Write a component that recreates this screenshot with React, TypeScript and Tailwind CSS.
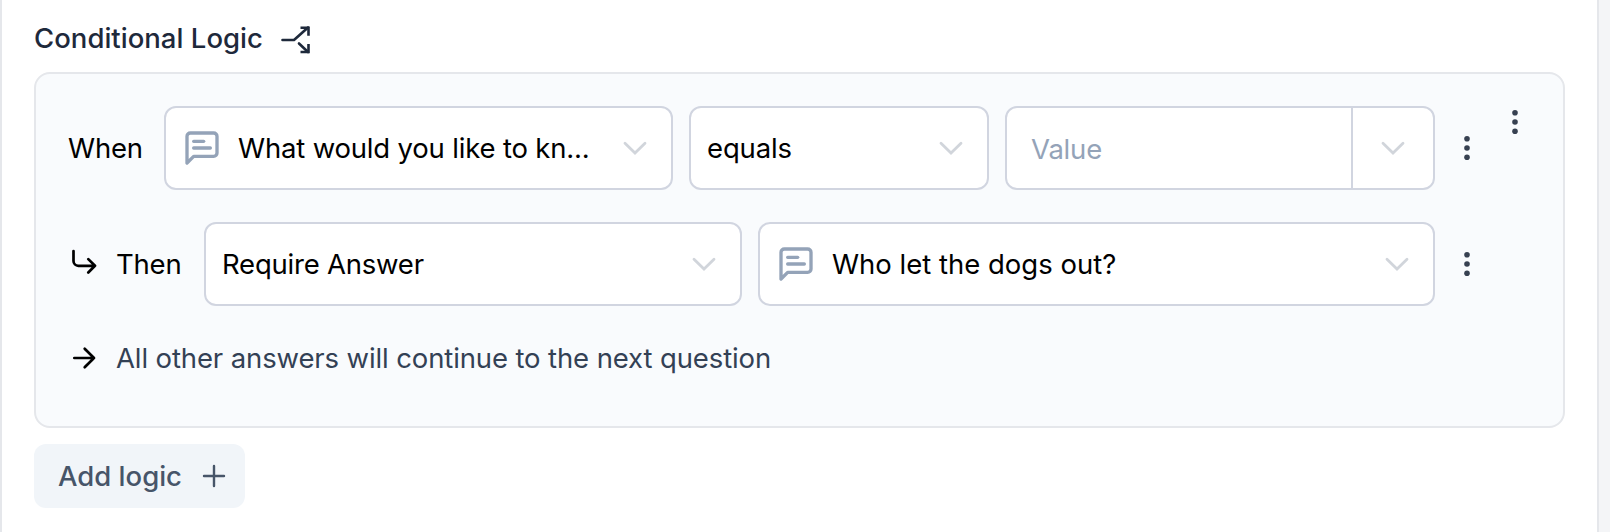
import React from "react";

function MessageIcon() {
  return (
    <svg className="size-10 shrink-0 text-[#94a3b8]" viewBox="0 0 24 24" fill="none" stroke="currentColor" strokeWidth="2" strokeLinecap="round" strokeLinejoin="round">
      <path d="M21 15a2 2 0 0 1-2 2H7l-4 4V5a2 2 0 0 1 2-2h14a2 2 0 0 1 2 2z" />
      <path d="M13 8H7" />
      <path d="M17 12H7" />
    </svg>
  );
}

function Chevron() {
  return (
    <svg className="h-4 w-6 shrink-0 text-[#d1d5db]" viewBox="0 0 24 16" fill="none" stroke="currentColor" strokeWidth="2.8" strokeLinecap="round" strokeLinejoin="miter">
      <path d="M2 3.3 12 13 22 3.3" />
    </svg>
  );
}

function Dots() {
  return (
    <svg className="h-7 w-6 shrink-0 text-[#374151]" viewBox="0 0 24 28" fill="currentColor">
      <circle cx="12" cy="4.7" r="2.8" />
      <circle cx="12" cy="14" r="2.8" />
      <circle cx="12" cy="23.3" r="2.8" />
    </svg>
  );
}

function Select({ className, icon, label, labelClass }: { className: string; icon?: boolean; label: string; labelClass: string }) {
  return (
    <button className={`flex h-[84px] shrink-0 items-center rounded-xl border-2 border-[#d1d5e0] bg-white pl-4 pr-6 text-left ${className}`}>
      {icon && <MessageIcon />}
      <span className={`flex-1 whitespace-nowrap ${labelClass}`}>{label}</span>
      <Chevron />
    </button>
  );
}

export default function App() {
  return (
    <div className="flex h-[532px] w-[1610px] overflow-hidden bg-[#f4f5f7] font-['Inter',sans-serif] text-[27.5px] leading-10 text-black">
      <div className="flex w-[1599px] flex-col items-start border-x-2 border-[#e5e7eb] bg-white px-8">
        <div className="flex h-[72px] items-center pt-1">
          <h2 className="whitespace-nowrap font-medium tracking-[0.02px] text-[#1e293b]">Conditional Logic</h2>
          <svg className="ml-4 size-8 text-[#1e293b]" viewBox="0 0 32 32" fill="none" stroke="currentColor" strokeWidth="2.6">
            <path d="M3.500 18H15L29 5.500" strokeLinecap="round" strokeLinejoin="round" />
            <path d="M21.500 5.800h8v8" />
            <path d="M20 21.500l9 8.500" strokeLinecap="round" />
            <path d="M21.500 30h8v-8" />
          </svg>
        </div>
        <section className="flex h-[356px] w-full justify-between rounded-2xl border-2 border-[#e5e7eb] bg-[#f9fbfd] p-8">
          <div className="flex flex-col">
            <div className="flex items-center">
              <span className="w-24 shrink-0 tracking-[-0.2px]">When</span>
              <Select className="w-[509px]" icon label="What would you like to kn..." labelClass="ml-4 tracking-[-0.18px]" />
              <Select className="ml-4 w-[300px]" label="equals" labelClass="tracking-[-0.15px]" />
              <div className="ml-4 flex h-[84px] w-[430px] overflow-hidden rounded-xl border-2 border-[#d1d5e0] bg-white">
                <div className="flex flex-1 items-center pl-6 pt-0.5 tracking-[-0.2px] text-[#94a3b8]">Value</div>
                <button className="flex w-[82px] items-center justify-center border-l-2 border-[#d1d5e0]">
                  <Chevron />
                </button>
              </div>
              <button className="ml-5">
                <Dots />
              </button>
            </div>
            <div className="mt-8 flex items-center">
              <svg className="size-8 shrink-0" viewBox="0 0 32 32" fill="none" stroke="currentColor" strokeWidth="2.7" strokeLinecap="round" strokeLinejoin="round">
                <path d="M5.500 3v10a4.800 4.800 0 0 0 4.800 4.800H27M20.300 11.100l6.700 6.700-6.700 6.700" />
              </svg>
              <span className="ml-4 w-[88px] shrink-0 tracking-[-0.2px]">Then</span>
              <Select className="w-[538px]" label="Require Answer" labelClass="tracking-[-0.22px]" />
              <Select className="ml-4 w-[677px]" icon label="Who let the dogs out?" labelClass="ml-4" />
              <button className="ml-5">
                <Dots />
              </button>
            </div>
            <div className="mt-8 flex items-center text-[#334155]">
              <svg className="size-8 shrink-0 text-black" viewBox="0 0 32 32" fill="none" stroke="currentColor" strokeWidth="2.7" strokeLinecap="round" strokeLinejoin="round">
                <path d="M6.300 16H26M16.700 6.700 26 16l-9.300 9.300" />
              </svg>
              <span className="ml-4 whitespace-nowrap tracking-[-0.12px]">All other answers will continue to the next question</span>
            </div>
          </div>
          <button className="mr-1 mt-0.5 h-7">
            <Dots />
          </button>
        </section>
        <button className="mt-4 flex h-16 w-[211px] items-center rounded-xl bg-[#f1f5f9] pl-6 font-medium text-[#475569]">
          <span className="whitespace-nowrap">Add logic</span>
          <svg className="ml-5 size-6" viewBox="0 0 24 24" fill="none" stroke="currentColor" strokeWidth="2.4" strokeLinecap="round">
            <path d="M12 2v20M2 12h20" />
          </svg>
        </button>
      </div>
    </div>
  );
}
